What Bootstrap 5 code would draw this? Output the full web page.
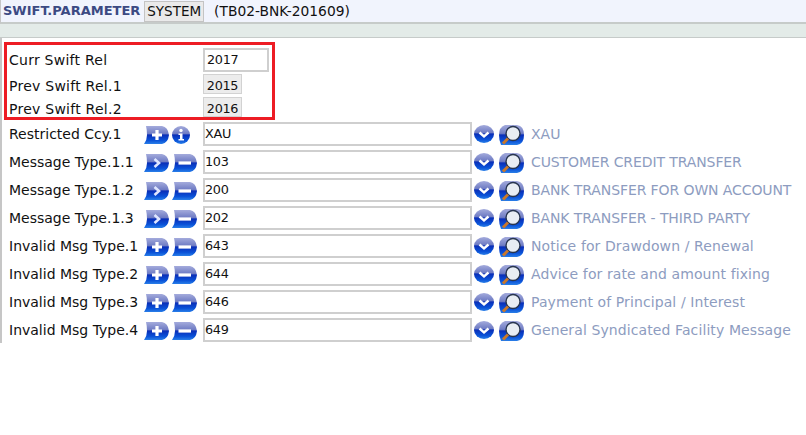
<!DOCTYPE html>
<html lang="en"><head><meta charset="utf-8"><title>SWIFT.PARAMETER</title>
<link href="https://cdn.jsdelivr.net/npm/bootstrap@5.3.0/dist/css/bootstrap.min.css" rel="stylesheet">
<style>
html,body{background:#fff;margin:0}
body{font-family:"DejaVu Sans",sans-serif;font-size:14px;color:#111;width:806px;height:435px;overflow:hidden}
.hdr{height:24px;background:#f1f4fd;border-bottom:2px solid #c6cbc9;border-left:1px solid #c6c6c6;padding-left:2px}
.hdr-title{font-weight:700;color:#3c4a83;font-size:13px}
.hdr-chip{background:#eaeaea;border:1px solid #c4c4c4;height:21px;line-height:19px;padding:0 2px;margin:0 10px 0 4px;font-size:13.500px}
.hdr-id{font-size:13.800px}
.band{height:14px;background:#e3ebe8;border-bottom:1px solid #c6cbc9}
.bodywrap{border-left:2px solid #c6c6c6;height:305px;padding-top:4px}
.redbox{width:271px;height:78px;border:3px solid #ed1c24;margin-left:2px;padding:2px 0 0 2px}
.rl{width:194px;flex:none;letter-spacing:.25px}
.val{font-size:12.800px;letter-spacing:-.3px}
.cur-in{width:66px;height:24px;border:2px solid #cfcfcf;padding-left:2px;line-height:20px;background:#fff}
.chip-v{width:39px;height:20px;background:#ececec;border:1px solid #d2d2d2;line-height:22px;text-align:center;align-self:flex-start;margin-top:-1px}
.r1{height:26px}
.r2a{height:23px;margin-top:2px}
.r2{height:23px}
.prow{height:28px;padding-left:7px}
.plabel{width:135px;flex:none;white-space:nowrap}
.ico{display:block;flex:none}
.ibtn{gap:3px;width:59px;flex:none;margin-top:2px}
.pin{width:269px;height:24px;border:2px solid #cfcfcf;line-height:20px;padding-left:0;flex:none;background:#fff}
.tools{gap:5px;width:59px;flex:none;padding-left:2px;margin-top:2px}
.pdesc{color:#8d9cc0;font-size:14px;white-space:nowrap}
.dup{letter-spacing:-.1px}
.dlo{letter-spacing:.1px}
</style></head><body>
<svg width="0" height="0" class="d-block" aria-hidden="true">
<defs>
<linearGradient id="gb" x1="0" y1="0" x2="0" y2="1"><stop offset="0" stop-color="#a4abdc"/><stop offset=".42" stop-color="#6f7cc4"/><stop offset=".5" stop-color="#0a2fb8"/><stop offset=".8" stop-color="#0a52d8"/><stop offset="1" stop-color="#2a7fe8"/></linearGradient>
<symbol id="sh" viewBox="0 0 25 18"><path d="M2 0H18Q24 1 25 9Q24 17 18 18H0Q3 14 3 9Q3 4 2 0Z" fill="url(#gb)"/></symbol>
<symbol id="plus" viewBox="0 0 25 18"><use href="#sh"/><path d="M13 4V14M8 9H18" stroke="#fff" stroke-width="3.200" fill="none"/></symbol>
<symbol id="minus" viewBox="0 0 25 18"><use href="#sh"/><path d="M6.500 9H19" stroke="#fff" stroke-width="3.200" fill="none"/></symbol>
<symbol id="next" viewBox="0 0 25 18"><use href="#sh"/><path d="M10.500 5L15 9L10.500 13" stroke="#dfe6ff" stroke-width="2.600" fill="none"/></symbol>
<symbol id="info" viewBox="0 0 18 18"><circle cx="9" cy="9" r="9" fill="url(#gb)"/><circle cx="9" cy="4.500" r="1.700" fill="#fff"/><path d="M6.500 7.500H10.500V13H12V14.500H6.500V13H8V9H6.500Z" fill="#fff"/></symbol>
<symbol id="down" viewBox="0 0 20 18"><ellipse cx="10" cy="9" rx="10" ry="9" fill="url(#gb)"/><path d="M5.500 7.500L10 11.500L14.500 7.500" stroke="#fff" stroke-width="2.400" fill="none"/></symbol>
<symbol id="lens" viewBox="0 0 25 20"><path d="M6 0H18Q25 1 25 10Q25 19 18 20H2Q0 15 0 10Q0 2 6 0Z" fill="url(#gb)"/><circle cx="14" cy="8.500" r="7" fill="#e8edf3" stroke="#27354f" stroke-width="1.400"/><path d="M9 13.500L4 18.500" stroke="#c9772a" stroke-width="3"/></symbol>
</defs></svg>

<div class="hdr d-flex align-items-center">
<span class="hdr-title">SWIFT.PARAMETER</span><span class="hdr-chip">SYSTEM</span><span class="hdr-id">(TB02-BNK-201609)</span>
</div>
<div class="band"></div>
<div class="bodywrap">
<div class="redbox">
<div class="d-flex align-items-center r1"><span class="rl">Curr Swift Rel</span><span class="cur-in val">2017</span></div>
<div class="d-flex align-items-center r2a"><span class="rl">Prev Swift Rel.1</span><span class="chip-v val">2015</span></div>
<div class="d-flex align-items-center r2"><span class="rl">Prev Swift Rel.2</span><span class="chip-v val">2016</span></div>
</div>

<div class="d-flex align-items-center prow"><span class="plabel">Restricted Ccy.1</span><span class="d-flex ibtn"><svg class="ico" width="25" height="18"><use href="#plus"/></svg><svg class="ico" width="18" height="18"><use href="#info"/></svg></span><span class="pin val">XAU</span><span class="d-flex tools"><svg class="ico" width="20" height="18"><use href="#down"/></svg><svg class="ico" width="25" height="20"><use href="#lens"/></svg></span><span class="pdesc">XAU</span></div>
<div class="d-flex align-items-center prow"><span class="plabel">Message Type.1.1</span><span class="d-flex ibtn"><svg class="ico" width="25" height="18"><use href="#next"/></svg><svg class="ico" width="25" height="18"><use href="#minus"/></svg></span><span class="pin val">103</span><span class="d-flex tools"><svg class="ico" width="20" height="18"><use href="#down"/></svg><svg class="ico" width="25" height="20"><use href="#lens"/></svg></span><span class="pdesc dup">CUSTOMER CREDIT TRANSFER</span></div>
<div class="d-flex align-items-center prow"><span class="plabel">Message Type.1.2</span><span class="d-flex ibtn"><svg class="ico" width="25" height="18"><use href="#next"/></svg><svg class="ico" width="25" height="18"><use href="#minus"/></svg></span><span class="pin val">200</span><span class="d-flex tools"><svg class="ico" width="20" height="18"><use href="#down"/></svg><svg class="ico" width="25" height="20"><use href="#lens"/></svg></span><span class="pdesc dup">BANK TRANSFER FOR OWN ACCOUNT</span></div>
<div class="d-flex align-items-center prow"><span class="plabel">Message Type.1.3</span><span class="d-flex ibtn"><svg class="ico" width="25" height="18"><use href="#next"/></svg><svg class="ico" width="25" height="18"><use href="#minus"/></svg></span><span class="pin val">202</span><span class="d-flex tools"><svg class="ico" width="20" height="18"><use href="#down"/></svg><svg class="ico" width="25" height="20"><use href="#lens"/></svg></span><span class="pdesc dup">BANK TRANSFER - THIRD PARTY</span></div>
<div class="d-flex align-items-center prow"><span class="plabel">Invalid Msg Type.1</span><span class="d-flex ibtn"><svg class="ico" width="25" height="18"><use href="#plus"/></svg><svg class="ico" width="25" height="18"><use href="#minus"/></svg></span><span class="pin val">643</span><span class="d-flex tools"><svg class="ico" width="20" height="18"><use href="#down"/></svg><svg class="ico" width="25" height="20"><use href="#lens"/></svg></span><span class="pdesc dlo">Notice for Drawdown / Renewal</span></div>
<div class="d-flex align-items-center prow"><span class="plabel">Invalid Msg Type.2</span><span class="d-flex ibtn"><svg class="ico" width="25" height="18"><use href="#plus"/></svg><svg class="ico" width="25" height="18"><use href="#minus"/></svg></span><span class="pin val">644</span><span class="d-flex tools"><svg class="ico" width="20" height="18"><use href="#down"/></svg><svg class="ico" width="25" height="20"><use href="#lens"/></svg></span><span class="pdesc dlo">Advice for rate and amount fixing</span></div>
<div class="d-flex align-items-center prow"><span class="plabel">Invalid Msg Type.3</span><span class="d-flex ibtn"><svg class="ico" width="25" height="18"><use href="#plus"/></svg><svg class="ico" width="25" height="18"><use href="#minus"/></svg></span><span class="pin val">646</span><span class="d-flex tools"><svg class="ico" width="20" height="18"><use href="#down"/></svg><svg class="ico" width="25" height="20"><use href="#lens"/></svg></span><span class="pdesc dlo">Payment of Principal / Interest</span></div>
<div class="d-flex align-items-center prow"><span class="plabel">Invalid Msg Type.4</span><span class="d-flex ibtn"><svg class="ico" width="25" height="18"><use href="#plus"/></svg><svg class="ico" width="25" height="18"><use href="#minus"/></svg></span><span class="pin val">649</span><span class="d-flex tools"><svg class="ico" width="20" height="18"><use href="#down"/></svg><svg class="ico" width="25" height="20"><use href="#lens"/></svg></span><span class="pdesc dlo">General Syndicated Facility Message</span></div>
</div>
</body></html>
